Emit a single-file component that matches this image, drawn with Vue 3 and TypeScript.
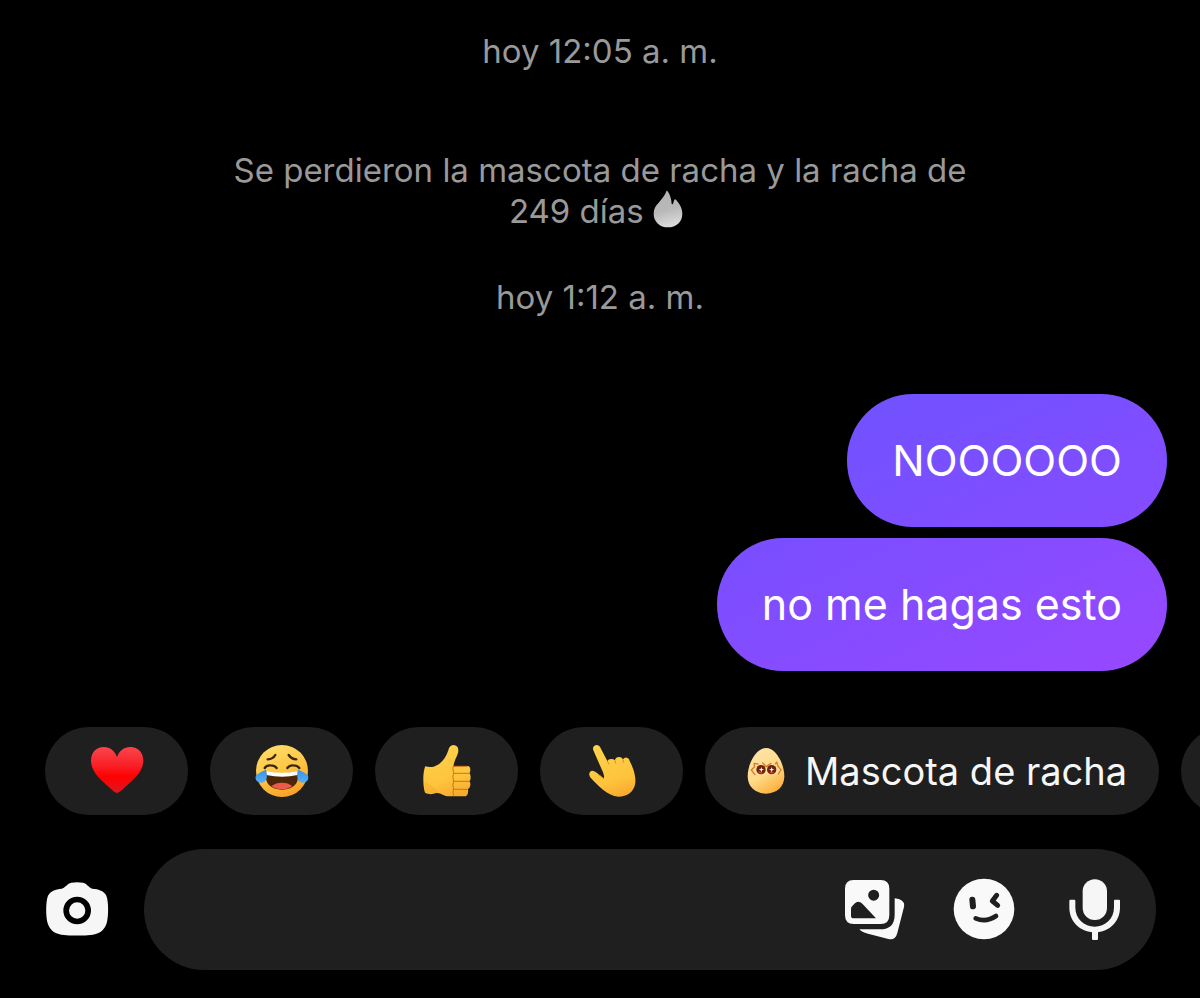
<script setup lang="ts">
import { ref } from 'vue'

interface Message {
  id: number
  text: string
  tone: 'upper' | 'lower'
}

const messages: Message[] = [
  { id: 1, text: 'NOOOOOO', tone: 'upper' },
  { id: 2, text: 'no me hagas esto', tone: 'lower' },
]

const draft = ref('')
</script>

<template>
  <div class="chat">
    <main class="thread">
      <time class="stamp">hoy 12:05 a. m.</time>
      <p class="notice">
        Se perdieron la mascota de racha y la racha de 249 días
        <svg class="flame" viewBox="544 124 90 114" aria-hidden="true">
          <defs>
            <linearGradient id="flame" x1="0" y1="0" x2="0.2" y2="1">
              <stop offset="0" stop-color="#b4b4b4" />
              <stop offset="0.6" stop-color="#b9b9b9" />
              <stop offset="1" stop-color="#d8d8d8" />
            </linearGradient>
          </defs>
          <path fill="url(#flame)" d="M586 126C590 129 599 143 600 165Q601 169 604 165L608 153Q610 150 613 153C623 164 632 177 632 195C632 220 613 236 589 236C564 236 546 219 546 195C546 180 552 171 561 162C571 151 580 140 584 128Q585 125 586 126Z" />
        </svg>
      </p>
      <time class="stamp second">hoy 1:12 a. m.</time>
      <ul class="bubbles">
        <li v-for="m in messages" :key="m.id" class="bubble" :class="m.tone">{{ m.text }}</li>
      </ul>
    </main>

    <div class="chips">
      <button class="chip" type="button" aria-label="Corazón">
        <svg class="emoji" viewBox="174 69 168 168" aria-hidden="true">
          <defs>
            <linearGradient id="heart" x1="0" y1="0" x2="0" y2="1">
              <stop offset="0" stop-color="#fa454c" />
              <stop offset="0.4" stop-color="#f92026" />
              <stop offset="0.65" stop-color="#ff0000" />
              <stop offset="1" stop-color="#dc1720" />
            </linearGradient>
          </defs>
          <path fill="url(#heart)" d="M258 112C252 92 237 81 219 81C195 81 180 98 180 122C180 158 213 182 240 207Q253 219 258 219Q263 219 276 207C303 182 337 158 337 122C337 98 321 81 298 81C279 81 264 92 258 112Z" />
        </svg>
      </button>

      <button class="chip" type="button" aria-label="Risa con lágrimas">
        <svg class="emoji" viewBox="670 69 168 168" aria-hidden="true">
          <defs>
            <linearGradient id="face" x1="0.2" y1="0" x2="0.6" y2="1">
              <stop offset="0" stop-color="#ffdd67" />
              <stop offset="0.5" stop-color="#fdc746" />
              <stop offset="1" stop-color="#f7a127" />
            </linearGradient>
            <linearGradient id="tear" x1="0" y1="0" x2="0" y2="1">
              <stop offset="0" stop-color="#3f8fe0" />
              <stop offset="1" stop-color="#4fb2fa" />
            </linearGradient>
          </defs>
          <circle cx="754" cy="153" r="78" fill="url(#face)" />
          <g fill="none" stroke="#3c2410" stroke-width="7" stroke-linecap="round">
            <path d="M711 118Q727 117 734 105" />
            <path d="M774 105Q782 117 797 118" />
            <path d="M702 144Q708 135 720 136Q732 136 738 144" />
            <path d="M770 144Q777 135 788 136Q800 136 806 144" />
          </g>
          <path fill="#4d2507" d="M705 161Q754 172 802 161Q804 183 793 195Q779 209 754 209Q729 209 715 195Q704 183 705 161Z" />
          <path fill="#fff" d="M707 154Q754 163 801 154L801 165Q754 176 707 165Z" />
          <path fill="#ec5a48" d="M722 198Q735 188 754 188Q773 188 785 198Q773 208 754 208Q735 208 722 198Z" />
          <path fill="url(#tear)" d="M706 149C711 167 710 187 692 188C677 189 671 174 677 166C683 158 695 154 706 149Z" />
          <path fill="url(#tear)" d="M802 149C797 167 799 187 816 188C831 189 836 174 831 166C825 158 813 154 802 149Z" />
        </svg>
      </button>

      <button class="chip" type="button" aria-label="Pulgar arriba">
        <svg class="emoji" viewBox="146 69 168 168" aria-hidden="true">
          <defs>
            <linearGradient id="hand" x1="0.3" y1="0" x2="0.6" y2="1">
              <stop offset="0" stop-color="#ffd24b" />
              <stop offset="0.7" stop-color="#fec33c" />
              <stop offset="1" stop-color="#f8ab30" />
            </linearGradient>
          </defs>
          <path fill="url(#hand)" d="M165 139Q178 143 190 140C213 132 227 114 234 91Q237 76 249 75Q264 76 264 91C264 105 254 116 250 134L250 139L292 138Q300 139 300 149Q300 157 297 160Q301 163 301 172Q301 181 297 184Q301 188 300 196Q299 204 293 207Q294 210 293 218Q292 229 281 229L240 229C219 230 212 217 198 219Q180 226 165 219C157 204 157 154 165 139Z" />
          <path fill="#e98a1f" opacity="0.2" d="M165 184Q189 201 204 217Q180 227 165 219Q160 207 165 184Z" />
          <g fill="none" stroke="#d0711c" stroke-width="3" stroke-linecap="round">
            <path d="M250 134Q245 146 250 158Q245 170 250 183Q245 195 250 207Q245 216 250 226" />
            <path d="M250 139L290 139M251 160L296 160M251 184L296 184M251 208L292 208" />
          </g>
        </svg>
      </button>

      <button class="chip" type="button" aria-label="Señalar arriba">
        <svg class="emoji" viewBox="641 69 168 168" aria-hidden="true">
          <path fill="url(#hand)" d="M678 75Q687 75 691 85L711 123Q714 117 722 117Q729 116 733 121Q737 110 748 111Q755 112 758 118Q763 111 770 113Q777 115 779 125C788 143 797 166 795 188C792 215 770 230 744 230C712 228 684 198 659 171Q653 159 662 153Q671 150 681 160L700 175Q703 171 698 157L669 91Q665 78 678 75Z" />
          <path fill="none" stroke="#dc8a25" stroke-width="3" stroke-linecap="round" d="M711 124L716 132M734 122L736 129M758 119L760 127M681 161L700 176" />
        </svg>
      </button>

      <button class="chip labelled" type="button">
        <svg class="egg" viewBox="138 81 120 144" aria-hidden="true">
          <defs>
            <linearGradient id="egg" x1="0.2" y1="0" x2="0.7" y2="1">
              <stop offset="0" stop-color="#ffe4a8" />
              <stop offset="0.55" stop-color="#fedb8a" />
              <stop offset="1" stop-color="#fcae39" />
            </linearGradient>
          </defs>
          <path fill="url(#egg)" d="M198 84C229 84 253 133 253 169C253 201 229 221 198 221C167 221 143 201 143 169C143 133 167 84 198 84Z" />
          <path fill="#ffdf94" d="M158 150L165 137L175 132L187 138L199 143L213 134L230 131L235 143L241 151L232 162L217 165L199 162L179 164L164 163Z" />
          <path fill="none" stroke="#d97a2d" stroke-width="4" stroke-linejoin="round" stroke-linecap="round" d="M165 164L154 150L164 140L162 130L174 132M188 129L199 140L213 130M226 132L230 126L234 139L243 149L235 162" />
          <circle cx="183" cy="149" r="14" fill="#6b2412" />
          <circle cx="215" cy="149" r="14" fill="#6b2412" />
          <path fill="#e5432e" d="M173 154Q179 163 188 160L183 155ZM207 155Q214 164 223 158L215 155Z" />
          <path fill="#fff" d="M184 141L186 147L192 149L186 151L184 157L182 151L176 149L182 147ZM215 141L217 147L223 149L217 151L215 157L213 151L207 149L213 147Z" />
        </svg>
        <span>Mascota de racha</span>
      </button>

      <button class="chip" type="button" aria-label="Más respuestas"></button>
    </div>

    <form class="composer" @submit.prevent>
      <button class="icon camera" type="button" aria-label="Cámara">
        <svg viewBox="42 118 198 180" aria-hidden="true">
          <path fill="#f6f6f6" d="M124 126Q141 124 159 126C171 128 176 141 187 144C207 145 222 151 229 165C236 181 236 228 230 248C224 267 211 279 189 282Q141 287 94 282C72 279 59 267 53 248C47 228 47 181 54 165C61 151 76 146 95 144C106 141 112 128 124 126Z" />
          <circle cx="141.500" cy="209.500" r="33" fill="none" stroke="#000" stroke-width="17" />
        </svg>
      </button>
      <div class="field">
        <input v-model="draft" type="text" aria-label="Mensaje" />
        <button class="icon" type="button" aria-label="Galería">
          <svg viewBox="36 54 192 192" aria-hidden="true">
            <path fill="#f9f9f9" fill-rule="evenodd" d="M71 60H152Q178 60 178 86V166Q178 192 152 192H71Q45 192 45 166V86Q45 60 71 60ZM63 148V167Q63 175 71 175H138L97 131Q85 119 73 131Q63 139 63 148ZM131 89A16.500 16.500 0 1 0 131 122A16.500 16.500 0 1 0 131 89Z" />
            <path fill="#f9f9f9" d="M194 115Q229 119 221 145L202 219Q196 242 175 237L114 221Q94 216 88 208H150Q194 208 194 164Z" />
          </svg>
        </button>
        <button class="icon" type="button" aria-label="Stickers">
          <svg viewBox="366 54 192 192" aria-hidden="true">
            <circle cx="462" cy="147" r="91" fill="#f9f9f9" />
            <g fill="none" stroke="#1f1f1f" stroke-linecap="round" stroke-linejoin="round">
              <path stroke-width="18" d="M427 119L429 139" />
              <path stroke-width="15" d="M500 106L487 123L503 136" />
              <path stroke-width="14" d="M437 175Q469 188 498 168" />
            </g>
          </svg>
        </button>
        <button class="icon" type="button" aria-label="Mensaje de voz">
          <svg viewBox="156 114 192 192" aria-hidden="true">
            <rect x="218" y="118" width="73" height="122" rx="36" fill="#f6f6f6" />
            <path fill="#f6f6f6" d="M181 179H193Q196 179 196 182V202C196 237 222 260 254 260C286 260 312 237 312 202V182Q312 179 315 179H327Q330 179 330 182V202C330 243 302 272 264 277V297Q264 300 261 300H249Q246 300 246 297V277C206 272 178 243 178 202V182Q178 179 181 179Z" />
          </svg>
        </button>
      </div>
    </form>
  </div>
</template>

<style>
body {
  margin: 0;
  background: #000;
}
</style>

<style scoped>
.chat {
  box-sizing: border-box;
  min-height: 100vh;
  display: flex;
  flex-direction: column;
  padding: 31px 0 28px;
  overflow: hidden;
  background: #000;
  color: #f6f6f6;
  font-family: Inter, "Noto Sans", sans-serif;
}

.thread {
  flex: 1;
  display: flex;
  flex-direction: column;
  align-items: center;
  padding: 0 33px 56px;
}

.stamp,
.notice {
  margin: 0;
  color: #999;
  font-size: 33px;
  line-height: 41px;
  text-align: center;
}

.notice {
  max-width: 770px;
  margin-top: 78px;
}

.second {
  margin-top: 45px;
}

.flame {
  width: 30px;
  height: 38px;
  margin: -8px 8px -8px 0;
  vertical-align: 3px;
}

.bubbles {
  align-self: stretch;
  display: flex;
  flex-direction: column;
  align-items: flex-end;
  gap: 11px;
  margin: 76px 0 0;
  padding: 0;
  list-style: none;
}

.bubble {
  padding: 38px 45px;
  border-radius: 66px;
  color: #fff;
  font-size: 43px;
  line-height: 57px;
}

.upper {
  background: linear-gradient(155deg, #7052ff, #864cff);
}

.lower {
  background: linear-gradient(155deg, #774fff, #9848ff);
}

button {
  margin: 0;
  border: 0;
  color: inherit;
  font-family: inherit;
  cursor: pointer;
}

.chips {
  display: flex;
  gap: 22px;
  padding-left: 45px;
  overflow: hidden;
}

.chip {
  flex: none;
  display: flex;
  align-items: center;
  justify-content: center;
  width: 143px;
  height: 88px;
  padding: 0;
  border-radius: 44px;
  background: #1f1f1f;
  font-size: 38px;
}

.labelled {
  gap: 19px;
  width: auto;
  padding: 0 32px 0 41px;
}

.emoji {
  width: 56px;
  height: 56px;
}

.egg {
  width: 40px;
  height: 48px;
}

.composer {
  display: flex;
  align-items: center;
  gap: 34px;
  margin-top: 34px;
  padding: 0 44px;
}

.field {
  flex: 1;
  display: flex;
  align-items: center;
  gap: 46px;
  box-sizing: border-box;
  height: 121px;
  min-width: 0;
  padding: 0 30px 0 48px;
  border-radius: 61px;
  background: #1f1f1f;
}

.field input {
  flex: 1;
  min-width: 0;
  padding: 0;
  border: 0;
  outline: 0;
  background: transparent;
  color: #f6f6f6;
  font-family: inherit;
  font-size: 43px;
}

.icon {
  flex: none;
  display: flex;
  width: 64px;
  height: 64px;
  padding: 0;
  background: transparent;
}

.camera {
  width: 66px;
  height: 60px;
}

.icon svg {
  width: 100%;
  height: 100%;
}
</style>
